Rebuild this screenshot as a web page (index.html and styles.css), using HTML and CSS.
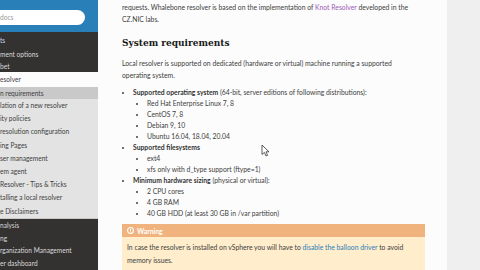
FILE: index.html
```html
<!DOCTYPE html>
<html lang="en">
<head>
  <meta charset="UTF-8">
  <meta name="viewport" content="width=device-width, initial-scale=1.0">
  <title>System requirements</title>
  <link rel="stylesheet" href="styles.css">
</head>
<body>

<!-- Sidebar -->
<nav class="sidebar">
  <div class="side-search">
    <div class="search-box">docs</div>
  </div>
  <div class="menu-dark top">
    <a class="caption">ts</a>
    <a>ment options</a>
    <a>bet</a>
  </div>
  <div class="menu-light">
    <a class="current">esolver</a>
    <a class="active">n requirements</a>
    <a>lation of a new resolver</a>
    <a>ity policies</a>
    <a>resolution configuration</a>
    <a>ing Pages</a>
    <a>ser management</a>
    <a>em agent</a>
    <a>Resolver - Tips &amp; Tricks</a>
    <a>talling a local resolver</a>
    <a>e Disclaimers</a>
  </div>
  <div class="menu-dark bottom">
    <a>nalysis</a>
    <a>ng</a>
    <a>rganization Management</a>
    <a>er dashboard</a>
  </div>
</nav>

<!-- Content -->
<main class="content">
  <p class="intro">requests. Whalebone resolver is based on the implementation of <a class="visited" href="#">Knot Resolver</a> developed in the<br>CZ.NIC labs.</p>

  <h2>System requirements</h2>

  <p>Local resolver is supported on dedicated (hardware or virtual) machine running a supported<br>operating system.</p>

  <ul class="reqs">
    <li><b>Supported operating system</b> (64-bit, server editions of following distributions):
      <ul>
        <li>Red Hat Enterprise Linux 7, 8</li>
        <li>CentOS 7, 8</li>
        <li>Debian 9, 10</li>
        <li>Ubuntu 16.04, 18.04, 20.04</li>
      </ul>
    </li>
    <li><b>Supported filesystems</b>
      <ul>
        <li>ext4</li>
        <li>xfs only with d_type support (ftype=1)</li>
      </ul>
    </li>
    <li><b>Minimum hardware sizing</b> (physical or virtual):
      <ul>
        <li>2 CPU cores</li>
        <li>4 GB RAM</li>
        <li>40 GB HDD (at least 30 GB in /var partition)</li>
      </ul>
    </li>
  </ul>

  <div class="admonition">
    <div class="admonition-title">
      <svg width="7" height="7" viewBox="0 0 10 10"><circle cx="5" cy="5" r="4.2" fill="none" stroke="#fff" stroke-width="1.6"/><rect x="4.3" y="2.5" width="1.4" height="3.2" fill="#fff"/><rect x="4.3" y="6.4" width="1.4" height="1.3" fill="#fff"/></svg>
      Warning
    </div>
    <p>In case the resolver is installed on vSphere you will have to <a href="#">disable the balloon driver</a> to avoid<br>memory issues.</p>
  </div>
</main>

<!-- mouse pointer from the recording -->
<svg class="pointer" width="9" height="13" viewBox="0 0 9 13"><path d="M1 1 L1 10.5 L3.4 8.4 L5 12 L6.6 11.3 L5 7.8 L8 7.8 Z" fill="#fff" stroke="#333" stroke-width="0.8" stroke-linejoin="round"/></svg>

</body>
</html>
```

FILE: styles.css
```css
body {
  margin: 0;
  display: flex;
  height: 270px;
  overflow: hidden;
  font-family: Lato, "Liberation Sans", sans-serif;
  color: #404040;
  background-color: #efefef;
}

a {
  text-decoration: none;
}

.sidebar {
  width: 98px;
  flex-shrink: 0;
  overflow: hidden;
  background-color: #343131;
  font-size: 6.6px;
}

.sidebar a {
  display: block;
  white-space: nowrap;
}

.side-search {
  height: 32px;
  background-color: #2980b9;
  display: flex;
  align-items: center;
}

.search-box {
  width: 93px;
  height: 15px;
  margin-left: -8px;
  margin-top: 2px;
  padding-left: 8px;
  box-sizing: border-box;
  background-color: #fff;
  border-radius: 0 8px 8px 0;
  color: #999;
  line-height: 15px;
}

.menu-dark a {
  color: #d9d9d9;
}

.menu-dark.top {
  padding-top: 2px;
  height: 38px;
}

.menu-dark.top a {
  line-height: 12.5px;
}

.menu-dark.top .caption {
  color: #c8d6e2;
  margin-bottom: 1px;
}

.menu-dark.bottom a {
  line-height: 12.8px;
}

.menu-light {
  background-color: #e3e3e3;
  border-bottom: 1px solid #c9c9c9;
}

.menu-light a {
  color: #404040;
  line-height: 13.2px;
}

.menu-light .current {
  background-color: #fcfcfc;
  line-height: 14.5px;
}

.menu-light .active {
  background-color: #c9c9c9;
  line-height: 12.5px;
}

.content {
  width: 349px;
  flex-shrink: 0;
  box-sizing: border-box;
  padding: 1px 0 0 24px;
  background-color: #fcfcfc;
  font-size: 6.8px;
  line-height: 12px;
  white-space: nowrap;
}

.content p {
  margin: 0;
}

.content a {
  color: #2980b9;
}

.content a.visited {
  color: #9b59b6;
}

h2 {
  margin: 10px 0 7px;
  font-family: "DejaVu Serif Condensed", "DejaVu Serif", serif;
  font-stretch: condensed;
  font-size: 10px;
  line-height: 15px;
  font-weight: bold;
  color: #1a1a1a;
}

.reqs {
  margin: 6px 0 0;
  padding-left: 11px;
  line-height: 11px;
}

.reqs ul {
  margin: 0;
  padding-left: 14px;
}

.reqs li {
  list-style: disc;
}

.reqs b {
  color: #333;
}

.admonition {
  margin-top: 5px;
  width: 303px;
  background-color: #ffedcc;
}

.admonition-title {
  display: flex;
  align-items: center;
  gap: 3px;
  height: 13px;
  padding-left: 5px;
  background-color: #f0b37e;
  color: #fff;
  font-weight: bold;
}

.admonition p {
  padding: 4px 5px 6px;
  line-height: 12.5px;
}

.pointer {
  position: absolute;
  left: 261px;
  top: 144px;
}
```
